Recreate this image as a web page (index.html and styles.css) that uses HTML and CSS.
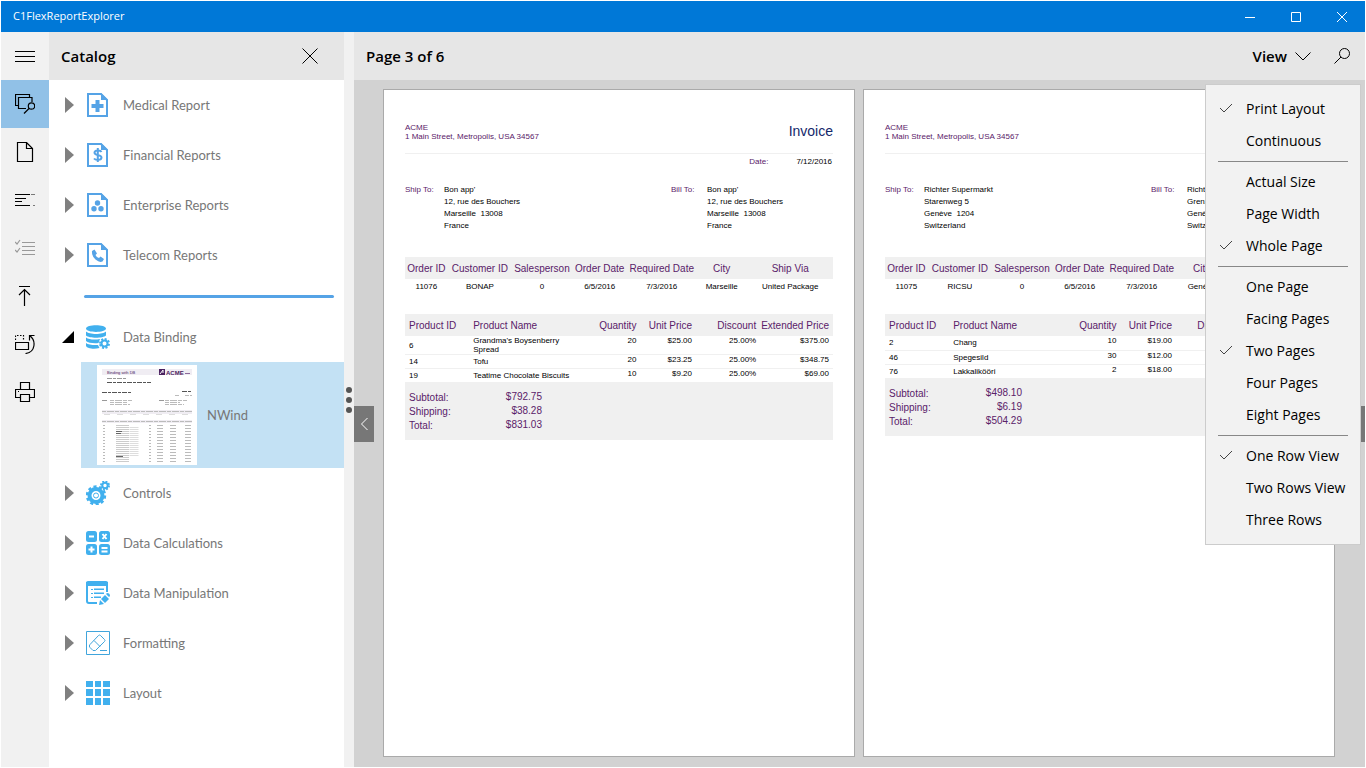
FILE: index.html
```html
<!DOCTYPE html>
<html lang="en">
<head>
    <meta charset="UTF-8">
    <meta name="viewport" content="width=device-width, initial-scale=1.0">
    <title>C1FlexReportExplorer</title>
    <link rel="stylesheet" href="styles.css">
</head>
<body>
    <header class="titlebar">
        <h1>C1FlexReportExplorer</h1>
        <div class="window-buttons">
            <button type="button" aria-label="Minimize"><svg width="10" height="10" viewBox="0 0 10 10"><path d="M0 5.500h10"/></svg></button>
            <button type="button" aria-label="Maximize"><svg width="10" height="10" viewBox="0 0 10 10"><path d="M.5.5h9v9h-9z"/></svg></button>
            <button type="button" aria-label="Close"><svg width="10" height="10" viewBox="0 0 10 10"><path d="M0 0l10 10M10 0L0 10"/></svg></button>
        </div>
    </header>

    <div class="app">
        <nav class="rail" aria-label="Tools">
            <button type="button" aria-label="Menu"><svg width="20" height="20" viewBox="0 0 20 20"><path d="M0 5.500h20M0 10.500h20M0 15.500h20"/></svg></button>
            <button type="button" class="active" aria-label="Catalog"><svg class="bold" width="20" height="20" viewBox="0 0 20 20"><path d="M3.500 11.500h-3V.5h14V3M11 14.500H3.500v-11h13.500V8"/><circle cx="16.500" cy="12" r="3.200"/><path d="M14.300 14.300L9 19.500"/></svg></button>
            <button type="button" aria-label="New page"><svg class="bold" width="20" height="20" viewBox="0 0 20 20"><path d="M2.500.5h9l6 6v13h-15zM11.500.5v6h6"/></svg></button>
            <button type="button" aria-label="Parameters"><svg class="bold" width="20" height="20" viewBox="0 0 20 20"><path d="M0 4.500h15M0 8.500h11M0 11.500h7M0 15.500h15M16.500 4.500h1M18.500 4.500h1M18.500 15.500h1"/></svg></button>
            <button type="button" class="disabled" disabled aria-label="Outline"><svg class="bold" width="20" height="20" viewBox="0 0 20 20"><path d="M7 4.500h13M7 8.500h13M7 12.500h13M7 16.500h13M0 4l2 2 3-4M0 12l2 2 3-4"/></svg></button>
            <button type="button" aria-label="Export"><svg class="bold" width="20" height="20" viewBox="0 0 20 20"><path d="M4 .5h11M9.500 20V3M4 9l5.500-5.500L15 9"/></svg></button>
            <button type="button" aria-label="Rotate"><svg class="bold" width="20" height="20" viewBox="0 0 20 20"><path d="M.5 8.500h13v7H.5z"/><path d="M.5 6V1.500h8V6" stroke-dasharray="1.500 1.500"/><path d="M14.500 6.500v-5h5M14.500 1.500c7 5 6 17-4 18"/></svg></button>
            <button type="button" aria-label="Print"><svg class="bold" width="20" height="20" viewBox="0 0 20 20"><path d="M5.500 7V.5h9V7M5.500 15.500h-5v-8h19v8h-5M5.500 12.500h9v7h-9zM3 9.500h1"/></svg></button>
        </nav>

        <aside class="catalog">
            <div class="catalog-header">
                <h2>Catalog</h2>
                <button type="button" aria-label="Close catalog"><svg width="16" height="16" viewBox="0 0 16 16"><path d="M.5.5l15 15M15.500.5l-15 15"/></svg></button>
            </div>
            <ul class="tree">
                <li><button type="button" class="node">
                    <svg class="arrow" width="12" height="16" viewBox="0 0 12 16"><path d="M3 0l9 8-9 8z"/></svg>
                    <svg class="icon report" width="24" height="24" viewBox="0 0 24 24"><path class="line" d="M2 1h13l6 6v16H2z"/><path d="M15 0l7 7h-7zM9.500 7h4v4h4v4h-4v4h-4v-4h-4v-4h4z"/></svg>
                    Medical Report</button></li>
                <li><button type="button" class="node">
                    <svg class="arrow" width="12" height="16" viewBox="0 0 12 16"><path d="M3 0l9 8-9 8z"/></svg>
                    <svg class="icon report" width="24" height="24" viewBox="0 0 24 24"><path class="line" d="M2 1h13l6 6v16H2z"/><path d="M15 0l7 7h-7z"/><path class="line" d="M15.500 9c-1-2-7-2-7 .8 0 3.200 7 1.700 7 4.700 0 3-6 3-7.500 1M11.800 5v14"/></svg>
                    Financial Reports</button></li>
                <li><button type="button" class="node">
                    <svg class="arrow" width="12" height="16" viewBox="0 0 12 16"><path d="M3 0l9 8-9 8z"/></svg>
                    <svg class="icon report" width="24" height="24" viewBox="0 0 24 24"><path class="line" d="M2 1h13l6 6v16H2z"/><path d="M15 0l7 7h-7z"/><circle cx="11.500" cy="10" r="2.700"/><circle cx="8" cy="15.700" r="2.700"/><circle cx="15" cy="15.700" r="2.700"/></svg>
                    Enterprise Reports</button></li>
                <li><button type="button" class="node">
                    <svg class="arrow" width="12" height="16" viewBox="0 0 12 16"><path d="M3 0l9 8-9 8z"/></svg>
                    <svg class="icon report" width="24" height="24" viewBox="0 0 24 24"><path class="line" d="M2 1h13l6 6v16H2z"/><path d="M15 0l7 7h-7zM6 8l2.500-1.500 2.500 4-1.500 1.500q1 2.500 3.500 3l1.500-1.500 3.500 2.500-1.500 2.500q-3 1.500-7-2T6 8z"/></svg>
                    Telecom Reports</button></li>
                <li class="divider" role="separator"></li>
                <li>
                    <button type="button" class="node" aria-expanded="true">
                        <svg class="arrow open" width="12" height="16" viewBox="0 0 12 16"><path d="M12 2v12H0z"/></svg>
                        <svg class="icon" width="24" height="24" viewBox="0 0 24 24"><path d="M0 3.500C0-1 20-1 20 3.500S0 8 0 3.500zM0 6.500c3 3.300 17 3.300 20 0v4c-3 3-17 3-20 0zM0 12.500c3 2.300 9 2.500 14 1.500l-1.500 4C8 18.500 2 18 0 16zM0 18c2 1.700 7 2.300 12 2l1.500 3C8 24.500 1 23.500 0 21z"/><circle class="line" cx="18.500" cy="18.500" r="3"/><path class="line" stroke-dasharray="2 1.530" d="M14 18.500a4.500 4.500 0 1 1 9 0a4.500 4.500 0 1 1-9 0"/></svg>
                        Data Binding</button>
                    <a class="report-item" href="#nwind">
                        <svg class="thumb" width="100" height="100" viewBox="0 0 100 100">
                            <path fill="#fff" d="M0 0h100v100H0z"/>
                            <path fill="#f0edf3" d="M5 4h90v6H5zM5 45h90v4H5zM5 55h90v3H5z"/>
                            <text class="thumb-title" x="10" y="9">Binding with DB</text>
                            <path fill="#4b2160" d="M62 4h6v6h-6z"/>
                            <path stroke="#fff" d="M63 9l3-4v3"/>
                            <text class="thumb-logo" x="69" y="10">ACME</text>
                            <path stroke="#8c6a9a" d="M88 8.500h5"/>
                            <path stroke="#555" stroke-dasharray="5 1 3 1" d="M10 17.500h44M5 27.500h29M85 26.500h10"/>
                            <path stroke="#999" stroke-dasharray="5 1 3 1" d="M10 13.500h19M5 35.500h6M62 35.500h6"/>
                            <path stroke="#bbb" stroke-dasharray="4 1 7 1" d="M13 35.500h22M13 37.500h17M13 39.500h20M68 35.500h22M68 37.500h15M68 39.500h19M78 30.500h4M88 30.500h7M5 46.500h90M5 56.500h90"/>
                            <path stroke="#ddd" stroke-dasharray="6 7" d="M7 49.500h86"/>
                            <path stroke="#ccc" stroke-dasharray="1 1" stroke-width="13" d="M25.500 60v37"/>
                            <path stroke="#ddd" stroke-dasharray="1 1" stroke-width="9" d="M37 62v29"/>
                            <path stroke="#bbb" stroke-dasharray="1 2" stroke-width="2" d="M7 60v37M53 60v37"/>
                            <path stroke="#bbb" stroke-dasharray="1 2" stroke-width="6" d="M63 60v37M76 60v37M91 60v37"/>
                            <path stroke="#666" d="M19 66.500h6M19 68.500h5M19 91.500h7"/>
                        </svg>
                        NWind</a>
                </li>
                <li><button type="button" class="node">
                    <svg class="arrow" width="12" height="16" viewBox="0 0 12 16"><path d="M3 0l9 8-9 8z"/></svg>
                    <svg class="icon" width="24" height="24" viewBox="0 0 24 24"><circle class="gear" cx="10" cy="14.500" r="6.500"/><circle class="teeth" cx="10" cy="14.500" r="8.700" stroke-dasharray="3 2.466"/><circle cx="10" cy="14.500" r="2.500" fill="none" stroke="#41b0ee"/><circle class="line" cx="19" cy="4.500" r="2.700"/><circle class="line" cx="19" cy="4.500" r="4" stroke-dasharray="1.800 1.340"/></svg>
                    Controls</button></li>
                <li><button type="button" class="node">
                    <svg class="arrow" width="12" height="16" viewBox="0 0 12 16"><path d="M3 0l9 8-9 8z"/></svg>
                    <svg class="icon" width="24" height="24" viewBox="0 0 24 24"><rect width="11" height="11" rx="2.500"/><rect x="13" width="11" height="11" rx="2.500"/><rect y="13" width="11" height="11" rx="2.500"/><rect x="13" y="13" width="11" height="11" rx="2.500"/><path class="cut" d="M3 5.500h5M16.500 3l4 5M20.500 3l-4 5M2.500 18.500h6M5.500 15.500v6M15.500 17h6M15.500 20.500h6"/></svg>
                    Data Calculations</button></li>
                <li><button type="button" class="node">
                    <svg class="arrow" width="12" height="16" viewBox="0 0 12 16"><path d="M3 0l9 8-9 8z"/></svg>
                    <svg class="icon" width="24" height="24" viewBox="0 0 24 24"><path class="line" d="M11 22H3q-2 0-2-2V2h20v9"/><path d="M2 0h18q2 0 2 2v3H0V2q0-2 2-2zM5 8h2v1H5zM5 12h2v1H5zM5 16h2v1H5zM8 7.500h10V9H8zM8 11.500h10V13H8zM8 15.500h7V17H8zM13 24l1-5 4 4zM15 18l4-4 4 4-4 4zM20 13l1-1q3 0 3 3l-1 1z"/></svg>
                    Data Manipulation</button></li>
                <li><button type="button" class="node">
                    <svg class="arrow" width="12" height="16" viewBox="0 0 12 16"><path d="M3 0l9 8-9 8z"/></svg>
                    <svg class="icon thin" width="24" height="24" viewBox="0 0 24 24"><path d="M.5.5h23v23H.5zM12.500 4.500q1-1 2 0l4 4q1 1 0 2l-9 9H7l-3-3q-1.500-1.500 0-3zM8 9.500l6 6M14 19.500h7"/></svg>
                    Formatting</button></li>
                <li><button type="button" class="node">
                    <svg class="arrow" width="12" height="16" viewBox="0 0 12 16"><path d="M3 0l9 8-9 8z"/></svg>
                    <svg class="icon" width="24" height="24" viewBox="0 0 24 24"><path d="M0 0h7v6H0zM9 0h6v6H9zM17 0h7v6h-7zM0 8h7v7H0zM9 8h6v7H9zM17 8h7v7h-7zM0 17h7v7H0zM9 17h6v7H9zM17 17h7v7h-7z"/></svg>
                    Layout</button></li>
            </ul>
        </aside>

        <div class="splitter" role="separator" aria-orientation="vertical"><i></i><i></i><i></i></div>

        <main class="viewer">
            <div class="viewer-header">
                <h2>Page 3 of 6</h2>
                <button type="button" class="view-btn" aria-haspopup="menu" aria-expanded="true">View
                    <svg width="16" height="16" viewBox="0 0 16 16"><path d="M.5 4.500L8 12l7.500-7.500"/></svg></button>
                <button type="button" class="search-btn" aria-label="Search"><svg width="16" height="16" viewBox="0 0 16 16"><circle cx="10.500" cy="5.500" r="5"/><path d="M7 9L.5 15.500"/></svg></button>
            </div>

            <div class="pages">
                <article class="page">
                    <div class="invoice-head">
                        <address>ACME<br>1 Main Street, Metropolis, USA 34567</address>
                        <h3>Invoice</h3>
                    </div>
                    <div class="invoice-date"><span class="label">Date:</span><span>7/12/2016</span></div>
                    <div class="parties">
                        <span class="label">Ship To:</span>
                        <address>Bon app'<br>12, rue des Bouchers<br>Marseille&nbsp; 13008<br>France</address>
                        <span class="label">Bill To:</span>
                        <address>Bon app'<br>12, rue des Bouchers<br>Marseille&nbsp; 13008<br>France</address>
                    </div>
                    <table class="order">
                        <thead>
                            <tr><th class="w10">Order ID</th><th class="w15">Customer ID</th><th class="w14">Salesperson</th><th class="w13">Order Date</th><th class="w16">Required Date</th><th class="w12">City</th><th class="w20">Ship Via</th></tr>
                        </thead>
                        <tbody>
                            <tr><td>11076</td><td>BONAP</td><td>0</td><td>6/5/2016</td><td>7/3/2016</td><td>Marseille</td><td>United Package</td></tr>
                        </tbody>
                    </table>
                    <table class="products">
                        <thead>
                            <tr><th class="w15">Product ID</th><th class="w29">Product Name</th><th class="w11 num">Quantity</th><th class="w13 num">Unit Price</th><th class="w15 num">Discount</th><th class="w17 num">Extended Price</th></tr>
                        </thead>
                        <tbody>
                            <tr><td>6</td><td class="name">Grandma's Boysenberry Spread</td><td class="num">20</td><td class="num">$25.00</td><td class="num">25.00%</td><td class="num">$375.00</td></tr>
                            <tr><td>14</td><td class="name">Tofu</td><td class="num">20</td><td class="num">$23.25</td><td class="num">25.00%</td><td class="num">$348.75</td></tr>
                            <tr><td>19</td><td class="name">Teatime Chocolate Biscuits</td><td class="num">10</td><td class="num">$9.20</td><td class="num">25.00%</td><td class="num">$69.00</td></tr>
                        </tbody>
                    </table>
                    <dl class="totals">
                        <dt>Subtotal:</dt><dd>$792.75</dd>
                        <dt>Shipping:</dt><dd>$38.28</dd>
                        <dt>Total:</dt><dd>$831.03</dd>
                    </dl>
                </article>

                <article class="page">
                    <div class="invoice-head">
                        <address>ACME<br>1 Main Street, Metropolis, USA 34567</address>
                    </div>
                    <div class="invoice-date"><span class="label">Date:</span><span>7/12/2016</span></div>
                    <div class="parties">
                        <span class="label">Ship To:</span>
                        <address>Richter Supermarkt<br>Starenweg 5<br>Genève&nbsp; 1204<br>Switzerland</address>
                        <span class="label">Bill To:</span>
                        <address>Richter Supermarkt<br>Grenzacherweg 237<br>Genève&nbsp; 1203<br>Switzerland</address>
                    </div>
                    <table class="order">
                        <thead>
                            <tr><th class="w10">Order ID</th><th class="w15">Customer ID</th><th class="w14">Salesperson</th><th class="w13">Order Date</th><th class="w16">Required Date</th><th class="w12">City</th><th class="w20">Ship Via</th></tr>
                        </thead>
                        <tbody>
                            <tr><td>11075</td><td>RICSU</td><td>0</td><td>6/5/2016</td><td>7/3/2016</td><td>Genève</td><td></td></tr>
                        </tbody>
                    </table>
                    <table class="products">
                        <thead>
                            <tr><th class="w15">Product ID</th><th class="w29">Product Name</th><th class="w11 num">Quantity</th><th class="w13 num">Unit Price</th><th class="w15 num">Discount</th><th class="w17 num"></th></tr>
                        </thead>
                        <tbody>
                            <tr><td>2</td><td class="name">Chang</td><td class="num">10</td><td class="num">$19.00</td><td></td><td></td></tr>
                            <tr><td>46</td><td class="name">Spegesild</td><td class="num">30</td><td class="num">$12.00</td><td></td><td></td></tr>
                            <tr><td>76</td><td class="name">Lakkalikööri</td><td class="num">2</td><td class="num">$18.00</td><td></td><td></td></tr>
                        </tbody>
                    </table>
                    <dl class="totals">
                        <dt>Subtotal:</dt><dd>$498.10</dd>
                        <dt>Shipping:</dt><dd>$6.19</dd>
                        <dt>Total:</dt><dd>$504.29</dd>
                    </dl>
                </article>

                <button type="button" class="page-nav prev" aria-label="Previous page"><svg width="8" height="14" viewBox="0 0 8 14"><path d="M7.500 1l-6 6 6 6"/></svg></button>
                <button type="button" class="page-nav next" aria-label="Next page"><svg width="8" height="14" viewBox="0 0 8 14"><path d="M.5 1l6 6-6 6"/></svg></button>
            </div>

            <div class="view-menu" role="menu">
                <button type="button" role="menuitemradio" aria-checked="true"><svg width="14" height="10" viewBox="0 0 14 10"><path d="M1 5l4 4 8-8"/></svg>Print Layout</button>
                <button type="button" role="menuitemradio" aria-checked="false">Continuous</button>
                <hr>
                <button type="button" role="menuitemradio" aria-checked="false">Actual Size</button>
                <button type="button" role="menuitemradio" aria-checked="false">Page Width</button>
                <button type="button" role="menuitemradio" aria-checked="true"><svg width="14" height="10" viewBox="0 0 14 10"><path d="M1 5l4 4 8-8"/></svg>Whole Page</button>
                <hr>
                <button type="button" role="menuitemradio" aria-checked="false">One Page</button>
                <button type="button" role="menuitemradio" aria-checked="false">Facing Pages</button>
                <button type="button" role="menuitemradio" aria-checked="true"><svg width="14" height="10" viewBox="0 0 14 10"><path d="M1 5l4 4 8-8"/></svg>Two Pages</button>
                <button type="button" role="menuitemradio" aria-checked="false">Four Pages</button>
                <button type="button" role="menuitemradio" aria-checked="false">Eight Pages</button>
                <hr>
                <button type="button" role="menuitemradio" aria-checked="true"><svg width="14" height="10" viewBox="0 0 14 10"><path d="M1 5l4 4 8-8"/></svg>One Row View</button>
                <button type="button" role="menuitemradio" aria-checked="false">Two Rows View</button>
                <button type="button" role="menuitemradio" aria-checked="false">Three Rows</button>
            </div>
        </main>
    </div>
</body>
</html>
```
FILE: styles.css
```css
* {
    box-sizing: border-box;
}
body {
    height: 100vh;
    margin: 0;
    padding: 1px;
    display: flex;
    flex-direction: column;
    overflow: hidden;
    font-family: "Open Sans", "Noto Sans", sans-serif;
    font-size: 14px;
    color: #000;
    background-color: #fff;
}
h1, h2, h3, ul, dl, dd, address {
    margin: 0;
    padding: 0;
    font-weight: normal;
    font-style: normal;
}
button {
    padding: 0;
    border: none;
    background: none;
    font: inherit;
    color: inherit;
    cursor: pointer;
}
svg {
    flex-shrink: 0;
    fill: none;
    stroke: currentColor;
}

/* Title bar */
.titlebar {
    height: 31px;
    flex-shrink: 0;
    display: flex;
    justify-content: space-between;
    align-items: center;
    padding: 0 0 2px 12px;
    background-color: #0078d7;
    color: #fff;
}
.titlebar h1 {
    font-size: 11px;
}
.window-buttons {
    display: flex;
    align-self: stretch;
}
.window-buttons button {
    width: 46px;
    padding-top: 2px;
    display: flex;
    align-items: center;
    justify-content: center;
}

.app {
    flex: 1;
    min-height: 0;
    display: flex;
}

/* Left icon rail */
.rail {
    width: 48px;
    flex-shrink: 0;
    background-color: #f1f1f1;
}
.rail button {
    width: 100%;
    height: 48px;
    display: flex;
    align-items: center;
    justify-content: center;
}
.rail .active {
    background-color: #91c1e7;
}
.rail .disabled {
    color: #999;
}
.bold {
    stroke-width: 1.2;
}

/* Catalog */
.catalog {
    width: 295px;
    flex-shrink: 0;
    background-color: #fff;
}
.catalog-header {
    height: 48px;
    display: flex;
    align-items: center;
    justify-content: space-between;
    padding: 0 10px 0 12px;
    background-color: #e6e6e6;
}
.catalog-header h2, .viewer-header h2, .view-btn {
    font-size: 15px;
    font-weight: 600;
}
.catalog-header button {
    width: 48px;
    height: 48px;
    display: flex;
    align-items: center;
    justify-content: center;
}
.tree {
    list-style: none;
    font-family: Lato, "Open Sans", sans-serif;
    font-size: 13px;
    color: #777;
}
.node {
    width: 100%;
    height: 50px;
    display: flex;
    align-items: center;
    padding-left: 13px;
}
.arrow {
    fill: #808080;
    stroke: none;
    margin-right: 12px;
}
.arrow.open {
    fill: #000;
}
.icon {
    fill: #41b0ee;
    stroke: none;
    margin-right: 13px;
}
.icon .line {
    fill: none;
    stroke: #41b0ee;
    stroke-width: 2;
}
.icon.report {
    fill: #55a3e6;
}
.icon.report .line {
    stroke: #55a3e6;
}
.icon .gear {
    fill: none;
    stroke: #41b0ee;
    stroke-width: 4;
}
.icon .teeth {
    fill: none;
    stroke: #41b0ee;
    stroke-width: 3;
}
.icon .cut {
    fill: none;
    stroke: #fff;
    stroke-width: 2;
}
.icon.thin {
    fill: none;
    stroke: #41a5dc;
}
.divider {
    height: 32px;
    display: flex;
    align-items: center;
    padding: 0 10px 0 35px;
}
.divider::before {
    content: "";
    flex: 1;
    height: 3px;
    border-radius: 2px;
    background-color: #55a3e6;
}
.report-item {
    height: 106px;
    display: flex;
    align-items: center;
    gap: 10px;
    margin-left: 32px;
    padding-left: 16px;
    background-color: #c3e1f4;
    color: #777;
    text-decoration: none;
}
.thumb {
    stroke: none;
}
.thumb text {
    font-family: "Liberation Sans", Arial, sans-serif;
}
.thumb-title {
    font-size: 4px;
    fill: #4b2160;
}
.thumb-logo {
    font-size: 6px;
    font-weight: bold;
    fill: #4b2160;
}

.splitter {
    width: 10px;
    flex-shrink: 0;
    display: flex;
    flex-direction: column;
    align-items: center;
    justify-content: center;
    gap: 4px;
    background-color: #f1f1f1;
}
.splitter i {
    width: 6px;
    height: 6px;
    border-radius: 50%;
    background-color: #555;
}

/* Report viewer */
.viewer {
    position: relative;
    flex: 1;
    min-width: 0;
    display: flex;
    flex-direction: column;
    background-color: #d2d2d2;
}
.viewer-header {
    height: 48px;
    flex-shrink: 0;
    display: flex;
    align-items: center;
    padding-left: 12px;
    background-color: #e6e6e6;
}
.viewer-header h2 {
    flex: 1;
}
.view-btn {
    height: 48px;
    display: flex;
    align-items: center;
    gap: 8px;
    padding-right: 8px;
}
.search-btn {
    width: 46px;
    height: 48px;
    display: flex;
    align-items: center;
    justify-content: center;
}
.pages {
    position: relative;
    flex: 1;
    min-height: 0;
    display: grid;
    grid-template-columns: 1fr 1fr;
    gap: 8px;
    padding: 9px 30px 10px 29px;
}
.page {
    min-width: 0;
    padding: 33px 21px 0;
    border: 1px solid #aaa;
    background-color: #fff;
    font-family: "Liberation Sans", Arial, sans-serif;
    font-size: 8px;
    line-height: 12px;
}
.page-nav {
    position: absolute;
    top: 50%;
    width: 20px;
    height: 36px;
    display: flex;
    align-items: center;
    justify-content: center;
    transform: translateY(-50%);
    background-color: #777;
    color: #fff;
}
.prev {
    left: 0;
}
.next {
    right: 0;
}

/* Invoice */
.label, .invoice-head address {
    color: #5a2169;
}
.invoice-head {
    display: flex;
    align-items: center;
    justify-content: space-between;
    padding-bottom: 12px;
    border-bottom: 1px solid #f0f0f0;
    line-height: 9px;
}
.invoice-head h3 {
    padding-bottom: 2px;
    font-size: 14px;
    color: #14286b;
}
.invoice-date {
    display: flex;
    justify-content: flex-end;
    gap: 28px;
    padding: 2px 1px 0 0;
}
.parties {
    display: grid;
    grid-template-columns: 39px 1fr 36px 126px;
    margin: 16px 0 25px;
}
.page table {
    width: 100%;
    table-layout: fixed;
    border-collapse: collapse;
}
.page th {
    height: 22px;
    padding: 2px 0 0;
    font-size: 10px;
    font-weight: normal;
    white-space: nowrap;
    background-color: #f0f0f0;
    color: #5a2169;
}
.page td {
    padding: 0;
}
.order {
    margin-bottom: 20px;
    text-align: center;
}
.page .order td {
    height: 15px;
    padding-top: 1px;
}
.products {
    text-align: left;
}
.page .products th {
    padding: 2px 4px 0;
}
.page .products td {
    height: 14px;
    padding: 0 4px;
    line-height: 9px;
    border-bottom: 1px solid #f0f0f0;
}
.page .products .name {
    padding-right: 20px;
}
.page .products .num {
    padding-left: 0;
    text-align: right;
}
.products td.num {
    vertical-align: top;
}
.w10 { width: 10%; }
.w11 { width: 11%; }
.w12 { width: 12%; }
.w13 { width: 13%; }
.w14 { width: 14%; }
.w15 { width: 15%; }
.w16 { width: 16%; }
.w17 { width: 17%; }
.w20 { width: 20%; }
.w29 { width: 29%; }
.totals {
    display: grid;
    grid-template-columns: 66px 67px;
    padding: 8px 4px 7px;
    font-size: 10px;
    background-color: #f0f0f0;
    color: #5a2169;
}
.totals dt {
    line-height: 14px;
}
.totals dd {
    text-align: right;
}

/* View menu */
.view-menu {
    position: absolute;
    top: 52px;
    right: 4px;
    width: 156px;
    padding: 8px 12px;
    border: 1px solid #ccc;
    background-color: #f2f2f2;
}
.view-menu button {
    width: 100%;
    height: 32px;
    display: flex;
    align-items: center;
    padding: 0 0 2px 28px;
    white-space: nowrap;
    text-align: left;
}
.view-menu svg {
    margin-left: -27px;
    margin-right: 13px;
    color: #444;
}
.view-menu hr {
    height: 1px;
    margin: 4px 0;
    border: none;
    background-color: #888;
}
```
